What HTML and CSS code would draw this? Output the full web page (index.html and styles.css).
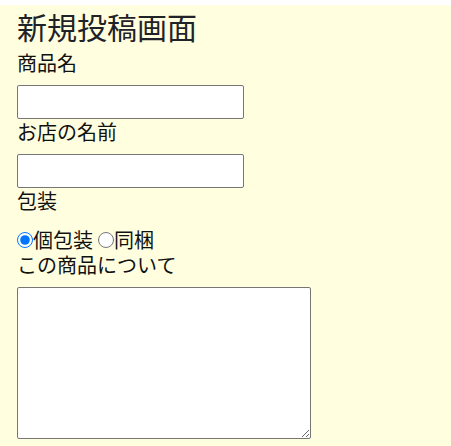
FILE: index.html
```html
<!DOCTYPE html>
<html lang="ja">
<head>
<meta charset="utf-8">
<title>新規投稿画面</title>
<link rel="stylesheet" href="styles.css">
</head>
<body>
<div class="page">
  <h2 class="title">新規投稿画面</h2>
  <form class="form">
    <label class="label" for="name">商品名</label>
    <input class="field" id="name" type="text">
    <label class="label" for="shop">お店の名前</label>
    <input class="field" id="shop" type="text">
    <p class="label label-group">包装</p>
    <div class="radios">
      <input class="radio" type="radio" name="pack" id="p1" checked><label for="p1">個包装</label>
      <input class="radio" type="radio" name="pack" id="p2"><label for="p2">同梱</label>
    </div>
    <label class="label" for="about">この商品について</label>
    <textarea class="area" id="about"></textarea>
  </form>
</div>
</body>
</html>
```
FILE: styles.css
```css
html, body {
  margin: 0;
  padding: 0;
  background: #ffffff;
}
.page {
  margin-top: 5px;
  background: #ffffe0;
  padding: 1px 0 0 17px;
  min-height: 441px;
  box-sizing: border-box;
  font-family: "Noto Sans CJK JP", "Noto Sans", sans-serif;
  color: #111;
}
.title {
  margin: 0;
  font-size: 30px;
  font-weight: normal;
  line-height: 40px;
  color: #1f2328;
  height: 44px;
}
.form {
  display: flex;
  flex-direction: column;
  align-items: flex-start;
  font-size: 20px;
  line-height: 25px;
}
.label {
  display: block;
  margin: 0 0 10px 0;
}
.label-group {
  margin-bottom: 14px;
}
.field {
  box-sizing: border-box;
  width: 227px;
  height: 34px;
  margin: 0;
  border: 1px solid #767676;
  border-radius: 2px;
  background: #fff;
  font-size: 16px;
  padding: 1px 2px;
}
.radios {
  display: flex;
  align-items: center;
  height: 25px;
  margin-bottom: 0;
}
.radios label {
  margin-right: 5px;
}
.radio {
  width: 16px;
  height: 16px;
  margin: 0;
  accent-color: #0075ff;
}
.area {
  box-sizing: border-box;
  width: 294px;
  height: 152px;
  margin: 0;
  border: 1px solid #767676;
  border-radius: 2px;
  background: #fff;
}
```
